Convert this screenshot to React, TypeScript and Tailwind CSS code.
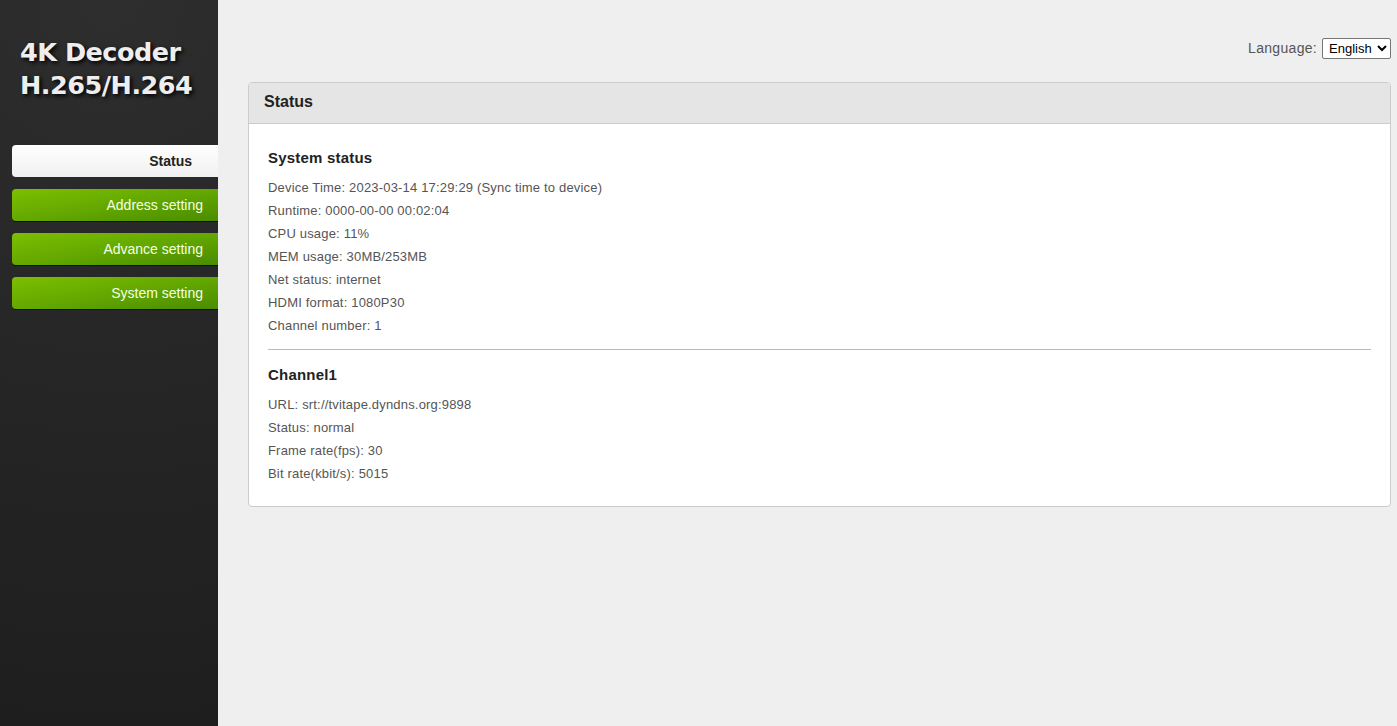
import React from "react";

const navItems = ["Address setting", "Advance setting", "System setting"];

function Row({ children }: { children: React.ReactNode }) {
  return (
    <div className="h-[23px] text-[13px] leading-[23px] tracking-[0.18px] text-[#555]">{children}</div>
  );
}

export default function App() {
  return (
    <div
      className="flex min-h-[726px] w-full bg-[#efefef]"
      style={{ fontFamily: "Arial, 'Liberation Sans', sans-serif" }}
    >
      <aside className="w-[218px] shrink-0 bg-[#242424] bg-[radial-gradient(circle_at_50%_0%,#2e2e2e,#1e1e1e)] pt-[36px]">
        <div
          className="pl-[20px] text-[25.5px] font-bold leading-[33px] tracking-[-0.5px] text-[#eeeeee] [text-shadow:2px_2px_4px_#000]"
          style={{ fontFamily: "'DejaVu Sans', Verdana, sans-serif" }}
        >
          <div>4K Decoder</div>
          <div>H.265/H.264</div>
        </div>
        <nav className="mt-[43px] flex flex-col gap-[12px] pl-[12px]">
          <div className="flex h-[32px] items-center justify-end rounded-l-[4px] bg-gradient-to-b from-[#ffffff] to-[#f0f0f0] pr-[26px] text-[14px] font-bold text-[#222]">
            Status
          </div>
          {navItems.map((t) => (
            <div
              key={t}
              className="flex h-[32px] items-center justify-end rounded-l-[4px] bg-gradient-to-br from-[#7cbf00] via-[#64a800] to-[#4a8c00] pr-[15px] text-[14px] text-[#f4ffe0] shadow-[0_1px_0_#111]"
            >
              {t}
            </div>
          ))}
        </nav>
      </aside>
      <main className="flex-1 pl-[30px] pr-[6px] pt-[38px]">
        <div className="flex items-center justify-end">
          <span className="mr-[5px] text-[14px] tracking-[0.3px] text-[#555]">Language:</span>
          <select className="h-[21px] rounded-[2px] border border-[#767676] bg-white px-[2px] text-[13px] text-black">
            <option>English</option>
          </select>
        </div>
        <div className="mt-[23px] overflow-hidden rounded-[4px] border border-[#cccccc] bg-white">
          <div className="flex h-[41px] items-center border-b border-[#cccccc] bg-[#e5e5e5] px-[15px] pb-[2px] text-[16px] font-bold text-[#222]">
            Status
          </div>
          <div className="px-[19px] pb-[21px] pt-[24px]">
            <div className="mb-[8px] h-[20px] text-[15px] font-bold leading-[20px] tracking-[0.2px] text-[#222]">
              System status
            </div>
            <Row>Device Time: 2023-03-14 17:29:29 (Sync time to device)</Row>
            <Row>Runtime: 0000-00-00 00:02:04</Row>
            <Row>CPU usage: 11%</Row>
            <Row>MEM usage: 30MB/253MB</Row>
            <Row>Net status: internet</Row>
            <Row>HDMI format: 1080P30</Row>
            <Row>Channel number: 1</Row>
            <div className="mt-[12px] border-t border-[#bbbbbb]" />
            <div className="mb-[8px] mt-[15px] h-[20px] text-[15px] font-bold leading-[20px] tracking-[0.2px] text-[#222]">
              Channel1
            </div>
            <Row>URL: srt://tvitape.dyndns.org:9898</Row>
            <Row>Status: normal</Row>
            <Row>Frame rate(fps): 30</Row>
            <Row>Bit rate(kbit/s): 5015</Row>
          </div>
        </div>
      </main>
    </div>
  );
}
